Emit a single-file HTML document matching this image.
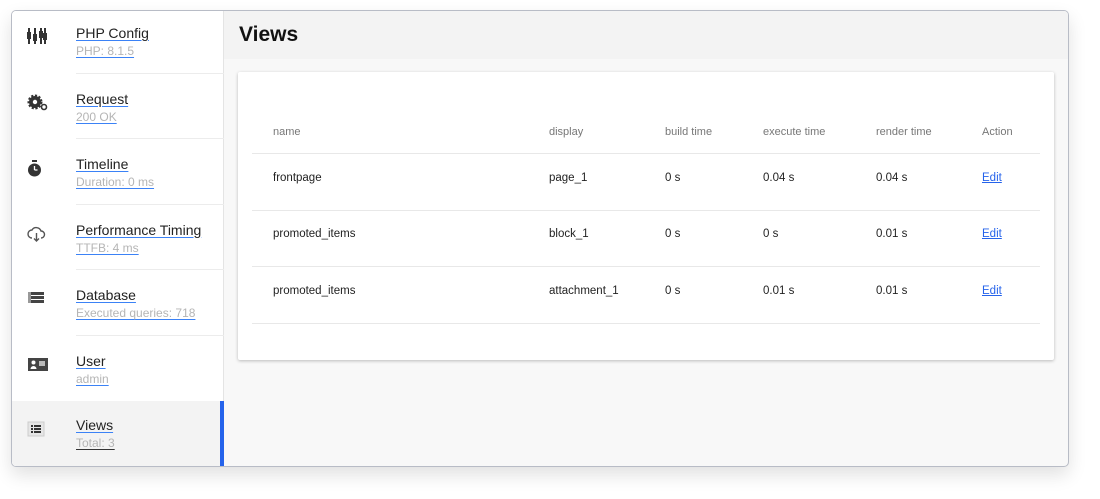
<!DOCTYPE html>
<html><head><style>
*{margin:0;padding:0;box-sizing:border-box}
body{width:1100px;height:499px;background:#fff;font-family:"Liberation Sans",sans-serif;position:relative;overflow:hidden}
.win{position:absolute;left:11px;top:10px;width:1058px;height:457px;border:1px solid #b8bcc6;border-radius:5px;overflow:hidden;background:#f8f8f8;box-shadow:0 8px 18px rgba(0,0,0,.12)}
.side{position:absolute;left:0;top:0;width:212px;height:100%;background:#fff;border-right:1px solid #e4e4e4}
.item{position:absolute;left:0;width:212px;height:65.5px}
.item .sep{position:absolute;left:64px;right:0;bottom:3px;height:1px;background:#ececec}
.item .t{position:absolute;left:64px;top:14px;font-size:14px;color:#222;text-decoration:underline;text-decoration-color:#3b82f6;text-underline-offset:2px}
.item .s{position:absolute;left:64px;top:33px;font-size:12px;color:#b5b5b5;text-decoration:underline;text-decoration-color:#3b82f6;text-underline-offset:2px}
.item svg{position:absolute;left:15px;top:17px}
.act{background:#f3f3f3}
.bar{position:absolute;left:208px;top:390px;width:4px;height:66px;background:#2563eb}
.head{position:absolute;left:212px;top:0;right:0;height:48px;background:#f3f3f3}
.head h1{position:absolute;left:15px;top:12px;font-size:21px;font-weight:bold;color:#111}
.card{position:absolute;left:226px;top:61px;width:816px;height:288px;background:#fff;box-shadow:0 1px 3px rgba(0,0,0,.25);border-radius:2px}
.c{position:absolute;font-size:11.5px;color:#222}
.h{color:#777;font-size:11px}
.ln{position:absolute;left:14px;width:788px;height:1px;background:#e8e8e8}
a{color:#2563eb;text-decoration:underline}
</style></head><body>
<div class="win">
<div class="side">
 <div class="item" style="top:0"><svg width="20" height="16" viewBox="0 0 20 16"><g fill="#333"><rect x="1" y="0" width="2" height="16"/><rect x="0" y="4" width="4" height="7"/><rect x="7" y="0" width="2" height="16"/><rect x="6" y="6" width="4" height="7"/><rect x="13" y="0" width="2" height="16"/><rect x="12" y="3" width="4" height="7"/><rect x="17" y="0" width="2" height="16"/><rect x="16" y="5" width="4" height="7"/></g></svg><div class="t">PHP Config</div><div class="s">PHP: 8.1.5</div><div class="sep"></div></div>
 <div class="item" style="top:65.5px"><svg width="22" height="20" viewBox="0 0 22 20"><circle cx="8" cy="8" r="6" fill="#333" stroke="#333" stroke-width="3" stroke-dasharray="2 1.5"/><circle cx="8" cy="8" r="2.2" fill="#fff"/><circle cx="17" cy="13" r="2.5" fill="none" stroke="#333" stroke-width="1.6"/></svg><div class="t">Request</div><div class="s">200 OK</div><div class="sep"></div></div>
 <div class="item" style="top:131px"><svg width="20" height="20" viewBox="0 0 20 20"><rect x="5" y="1" width="5" height="2" fill="#333"/><circle cx="7.5" cy="11" r="6.5" fill="#333"/><path d="M7.5 11V7M7.5 11h3" stroke="#fff" stroke-width="1.3"/></svg><div class="t">Timeline</div><div class="s">Duration: 0 ms</div><div class="sep"></div></div>
 <div class="item" style="top:196.5px"><svg width="20" height="20" viewBox="0 0 20 20"><path d="M5 13a4 4 0 0 1 0-8 5 5 0 0 1 9 1 3.5 3.5 0 0 1 0 7" fill="none" stroke="#555" stroke-width="1.4"/><path d="M9.5 8v8M7 13.5l2.5 2.5 2.5-2.5" fill="none" stroke="#555" stroke-width="1.4"/></svg><div class="t">Performance Timing</div><div class="s">TTFB: 4 ms</div><div class="sep"></div></div>
 <div class="item" style="top:262px"><svg width="20" height="20" viewBox="0 0 20 20"><g fill="#444"><rect x="1" y="2" width="16" height="3"/><rect x="1" y="6" width="16" height="3"/><rect x="1" y="10" width="16" height="3"/></g><rect x="1" y="2" width="3" height="11" fill="#999"/></svg><div class="t">Database</div><div class="s">Executed queries: 718</div><div class="sep"></div></div>
 <div class="item" style="top:327.5px"><svg width="22" height="20" viewBox="0 0 22 20"><rect x="1" y="2" width="20" height="13" fill="#444"/><circle cx="6.5" cy="6.5" r="2" fill="#fff"/><path d="M3.5 13a3 3 0 0 1 6 0z" fill="#fff"/><rect x="12" y="5" width="6" height="5" fill="#bbb"/></svg><div class="t">User</div><div class="s">admin</div></div>
 <div class="item act" style="top:390px;height:67px"><svg width="20" height="20" viewBox="0 0 20 20" style="top:19px"><rect x="1" y="2" width="16" height="14" fill="#e6e6e6" stroke="#ccc"/><g fill="#333"><rect x="4" y="5" width="2" height="2"/><rect x="7" y="5" width="7" height="2"/><rect x="4" y="8" width="2" height="2"/><rect x="7" y="8" width="7" height="2"/><rect x="4" y="11" width="2" height="2"/><rect x="7" y="11" width="7" height="2"/></g></svg><div class="t" style="top:16px">Views</div><div class="s" style="top:35px;text-decoration-color:#333">Total: 3</div></div>
</div>
<div class="bar"></div>
<div class="head"><h1>Views</h1></div>
<div class="card">
 <div class="c h" style="left:35px;top:54px">name</div>
 <div class="c h" style="left:311px;top:54px">display</div>
 <div class="c h" style="left:427px;top:54px">build time</div>
 <div class="c h" style="left:525px;top:54px">execute time</div>
 <div class="c h" style="left:638px;top:54px">render time</div>
 <div class="c h" style="left:744px;top:54px">Action</div>
 <div class="ln" style="top:81px"></div>
 <div class="c" style="left:35px;top:100px">frontpage</div><div class="c" style="left:311px;top:100px">page_1</div><div class="c" style="left:427px;top:100px">0 s</div><div class="c" style="left:525px;top:100px">0.04 s</div><div class="c" style="left:638px;top:100px">0.04 s</div><div class="c" style="left:744px;top:100px"><a>Edit</a></div>
 <div class="ln" style="top:138px"></div>
 <div class="c" style="left:35px;top:156px">promoted_items</div><div class="c" style="left:311px;top:156px">block_1</div><div class="c" style="left:427px;top:156px">0 s</div><div class="c" style="left:525px;top:156px">0 s</div><div class="c" style="left:638px;top:156px">0.01 s</div><div class="c" style="left:744px;top:156px"><a>Edit</a></div>
 <div class="ln" style="top:194px"></div>
 <div class="c" style="left:35px;top:213px">promoted_items</div><div class="c" style="left:311px;top:213px">attachment_1</div><div class="c" style="left:427px;top:213px">0 s</div><div class="c" style="left:525px;top:213px">0.01 s</div><div class="c" style="left:638px;top:213px">0.01 s</div><div class="c" style="left:744px;top:213px"><a>Edit</a></div>
 <div class="ln" style="top:251px"></div>
</div>
</div>
</body></html>
